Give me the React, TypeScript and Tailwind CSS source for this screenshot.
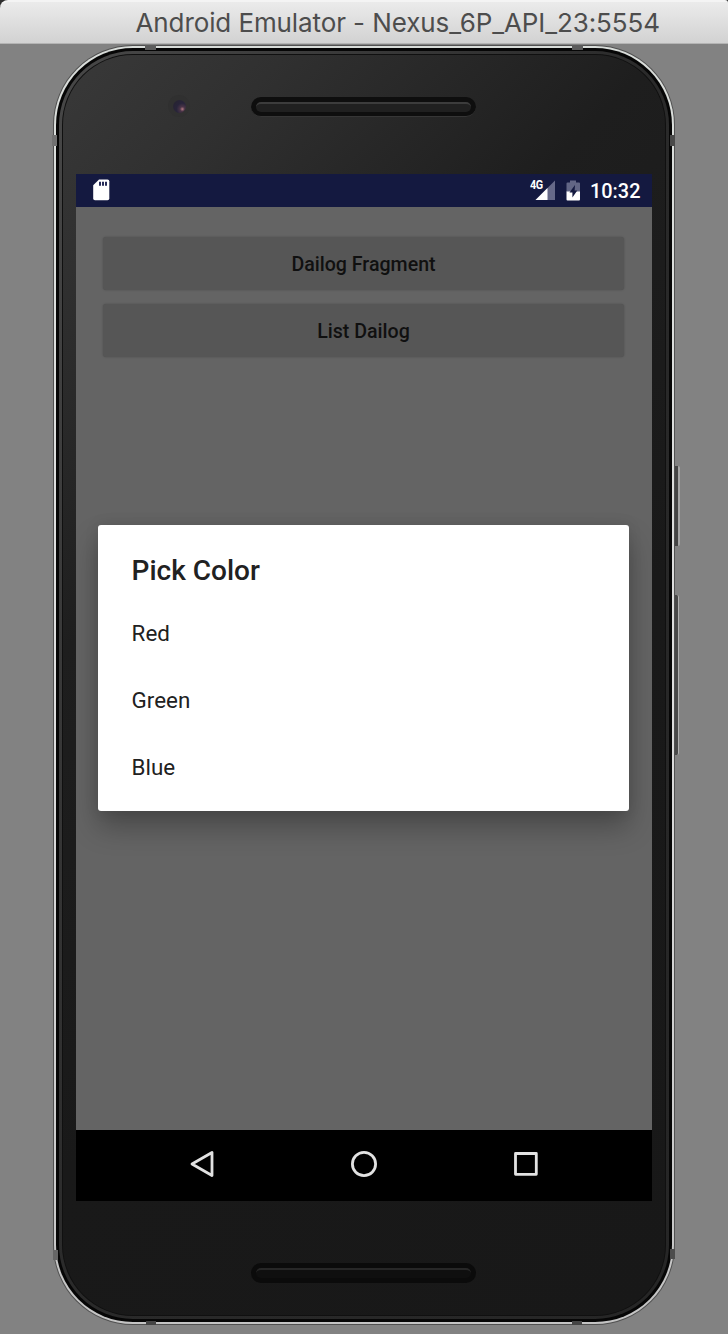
import React from "react";

function TitleBar() {
  return (
    <header className="h-11 shrink-0 bg-[#2e2e2e]">
      <div className="flex h-11 items-center rounded-tl-[8px] rounded-tr-[3px] border-t-2 border-b border-t-[#f4f4f4] border-b-[#b4b4b4] bg-gradient-to-b from-[#ebebeb] to-[#d2d2d2] pl-[135.5px]">
        <h1 className="whitespace-nowrap font-[Inter,sans-serif] text-[26px] leading-[40px] tracking-[-0.1px] text-[#4d4d4d]">
          Android Emulator - Nexus_6P_API_23:5554
        </h1>
      </div>
    </header>
  );
}

function Speaker() {
  return (
    <div className="h-5 w-[225px] rounded-full border-b border-[#363636] bg-[#0e0e0e] px-[5px] pt-[5px]">
      <div className="h-[10px] rounded-full border-t-2 border-[#3c3c3c] bg-[#202020]" />
    </div>
  );
}

function BottomSpeaker() {
  return (
    <div className="h-5 w-[225px] rounded-full bg-[#0b0b0b] px-[5px] pt-[5px]">
      <div className="h-[10px] rounded-full border-t-2 border-[#272727] bg-[#0f0f0f]" />
    </div>
  );
}

function StatusBar() {
  return (
    <div className="flex h-[33px] shrink-0 items-center bg-[#141940] pr-3 pl-[16.5px] text-white">
      <svg width="17" height="22" viewBox="0 0 17 22" className="-mt-px">
        <path d="M6 0.5H14.5Q16.3 0.5 16.3 2.3V19.5Q16.3 21.3 14.5 21.3H2Q0.2 21.3 0.2 19.5V6.3Z" fill="#fff" />
        <path d="M6 2.7h2v4H6zM9 2.7h2v4H9zM12 2.7h2v4h-2z" fill="#252a57" />
      </svg>
      <div className="ml-auto flex items-center">
        <div className="relative h-[21px] w-[26px]">
          <svg width="26" height="21" viewBox="0 0 26 21" className="absolute inset-0">
            <path d="M25 0.5V20H5.5Z" fill="#666988" />
            <path d="M17.5 8V20H5.5Z" fill="#fff" />
          </svg>
          <span className="absolute top-0 left-0 origin-left scale-x-90 font-[Roboto,sans-serif] text-[12px] leading-[11px] font-bold tracking-[-0.4px]">4G</span>
        </div>
        <svg width="15" height="21" viewBox="0 0 15 21" className="ml-[10px]">
          <path d="M4 0.5h6v2h3q1 0 1 1V12H0.5V3.5q0-1 1-1H4Z" fill="#626685" />
          <path d="M0.5 11.5H14V19.5q0 1-1 1H1.5q-1 0-1-1Z" fill="#fff" />
          <path d="M9 5 3.5 12.6H6.4V17.5L11.3 10.4H8.6Z" fill="#141940" />
        </svg>
        <span className="ml-[9px] w-[50px] whitespace-nowrap pt-[2px] font-[Roboto,sans-serif] text-[19.9px] leading-[31px] font-medium">10:32</span>
      </div>
    </div>
  );
}

function AppButton({ label }: { label: string }) {
  return (
    <button className="h-[53px] w-full rounded-[3px] bg-[#565656] pt-[2px] font-[Roboto,sans-serif] text-[19.6px] leading-[51px] font-medium text-[#101010] shadow-[0_0_2px_rgba(0,0,0,0.25)]">
      {label}
    </button>
  );
}

function PickColorDialog() {
  return (
    <div
      role="dialog"
      className="absolute top-[318px] left-[22px] h-[286px] w-[531px] rounded-[3px] bg-white pl-[33.6px] font-[Roboto,sans-serif] text-[#212121] shadow-[0_16px_28px_rgba(0,0,0,0.28),0_0_14px_rgba(0,0,0,0.1)]"
    >
      <h2 className="pt-[26px] text-[28px] leading-[40px] font-medium">Pick Color</h2>
      <ul className="pt-[9.2px] text-[22.4px]">
        {["Red", "Green", "Blue"].map((color) => (
          <li key={color} className="flex h-[67.2px] items-center">
            {color}
          </li>
        ))}
      </ul>
    </div>
  );
}

function NavBar() {
  return (
    <nav className="flex h-[71px] shrink-0 items-center justify-between bg-black pr-[112px] pb-[3px] pl-[111.5px]">
      <svg width="28" height="30" viewBox="0 0 28 30" fill="none" stroke="#e2e2e2" strokeWidth="2.8" strokeLinejoin="round">
        <path d="M4 15 24 3.5V26.5Z" />
      </svg>
      <svg width="28" height="28" viewBox="0 0 28 28" fill="none" stroke="#e2e2e2" strokeWidth="2.8">
        <circle cx="14" cy="14" r="11.6" />
      </svg>
      <svg width="28" height="28" viewBox="0 0 28 28" fill="none" stroke="#e2e2e2" strokeWidth="2.8" strokeLinejoin="round">
        <rect x="3.5" y="3.5" width="20.8" height="20.8" />
      </svg>
    </nav>
  );
}

function Screen() {
  return (
    <div className="flex h-[1027px] w-[576px] shrink-0 flex-col">
      <StatusBar />
      <main className="relative flex-1 overflow-hidden bg-[#646464]">
        <div className="flex flex-col gap-[14px] pt-[29.5px] pr-[28px] pl-[27px]">
          <AppButton label="Dailog Fragment" />
          <AppButton label="List Dailog" />
        </div>
        <PickColorDialog />
      </main>
      <NavBar />
    </div>
  );
}

function Phone() {
  return (
    <div className="relative mt-px ml-[53px] h-[1280px] w-[622px] rounded-[80px] bg-[#505050] p-px">
      <div className="h-full rounded-[79px] bg-gradient-to-b from-[#d9ddda] via-[#dedede] to-[#c4c4c4] p-[2px]">
        <div className="h-full rounded-[77px] bg-[#060606] p-[3px]">
          <div className="h-full rounded-[74px] bg-gradient-to-br from-[#484848] via-[#2a2a2a] to-[#262626] p-[3px]">
            <div className="h-full rounded-[71px] bg-[#101010] p-px">
              <div className="flex h-full flex-col items-center rounded-[70px] bg-[linear-gradient(135deg,#393939_0%,#303030_12%,#1e1e1e_32%,#191919_60%,#181818_100%)]">
                <div className="flex h-[119px] w-full shrink-0 items-start pt-[40px] pl-[105px]">
                  <div className="flex h-[22px] w-[22px] items-center justify-center rounded-full bg-[#303030]">
                    <div className="h-[13px] w-[13px] rounded-full bg-[radial-gradient(circle_at_72%_70%,#b57b84_0%,#4a3447_18%,#28243a_45%,#26232d_100%)]" />
                  </div>
                  <div className="ml-[61px] pt-[2px]">
                    <Speaker />
                  </div>
                </div>
                <Screen />
                <div className="flex w-full pt-[62px] pl-[188px]">
                  <BottomSpeaker />
                </div>
              </div>
            </div>
          </div>
        </div>
      </div>

      {/* antenna seams on the metal rim */}
      <span className="absolute top-0 left-[92px] h-[5px] w-[11px] bg-[#5c5c5c]" />
      <span className="absolute top-0 right-[92px] h-[5px] w-[11px] bg-[#5c5c5c]" />
      <span className="absolute bottom-0 left-[93px] h-1 w-[10px] bg-[#444444]" />
      <span className="absolute right-[93px] bottom-0 h-1 w-[10px] bg-[#444444]" />
      <span className="absolute top-[90px] left-[-1px] h-[11px] w-[5px] bg-[#717171]" />
      <span className="absolute top-[90px] right-0 h-[11px] w-[5px] bg-[#4a4a4a]" />
      <span className="absolute bottom-[65px] left-0 h-[10px] w-[5px] bg-[#666666]" />
      <span className="absolute right-0 bottom-[66px] h-[10px] w-[5px] bg-[#4c4c4c]" />

      {/* power and volume keys */}
      <span className="absolute top-[421px] left-[622px] h-20 w-[5px] rounded-r-[2px] border-r-2 border-[#a5a5a5] bg-[#444444]" />
      <span className="absolute top-[550px] left-[622px] h-40 w-1 rounded-r-[2px] border-r border-[#b0b0b0] bg-[#484848]" />
    </div>
  );
}

export default function App() {
  return (
    <div className="flex h-[1334px] w-[728px] flex-col overflow-hidden bg-[#828282]">
      <TitleBar />
      <Phone />
    </div>
  );
}
